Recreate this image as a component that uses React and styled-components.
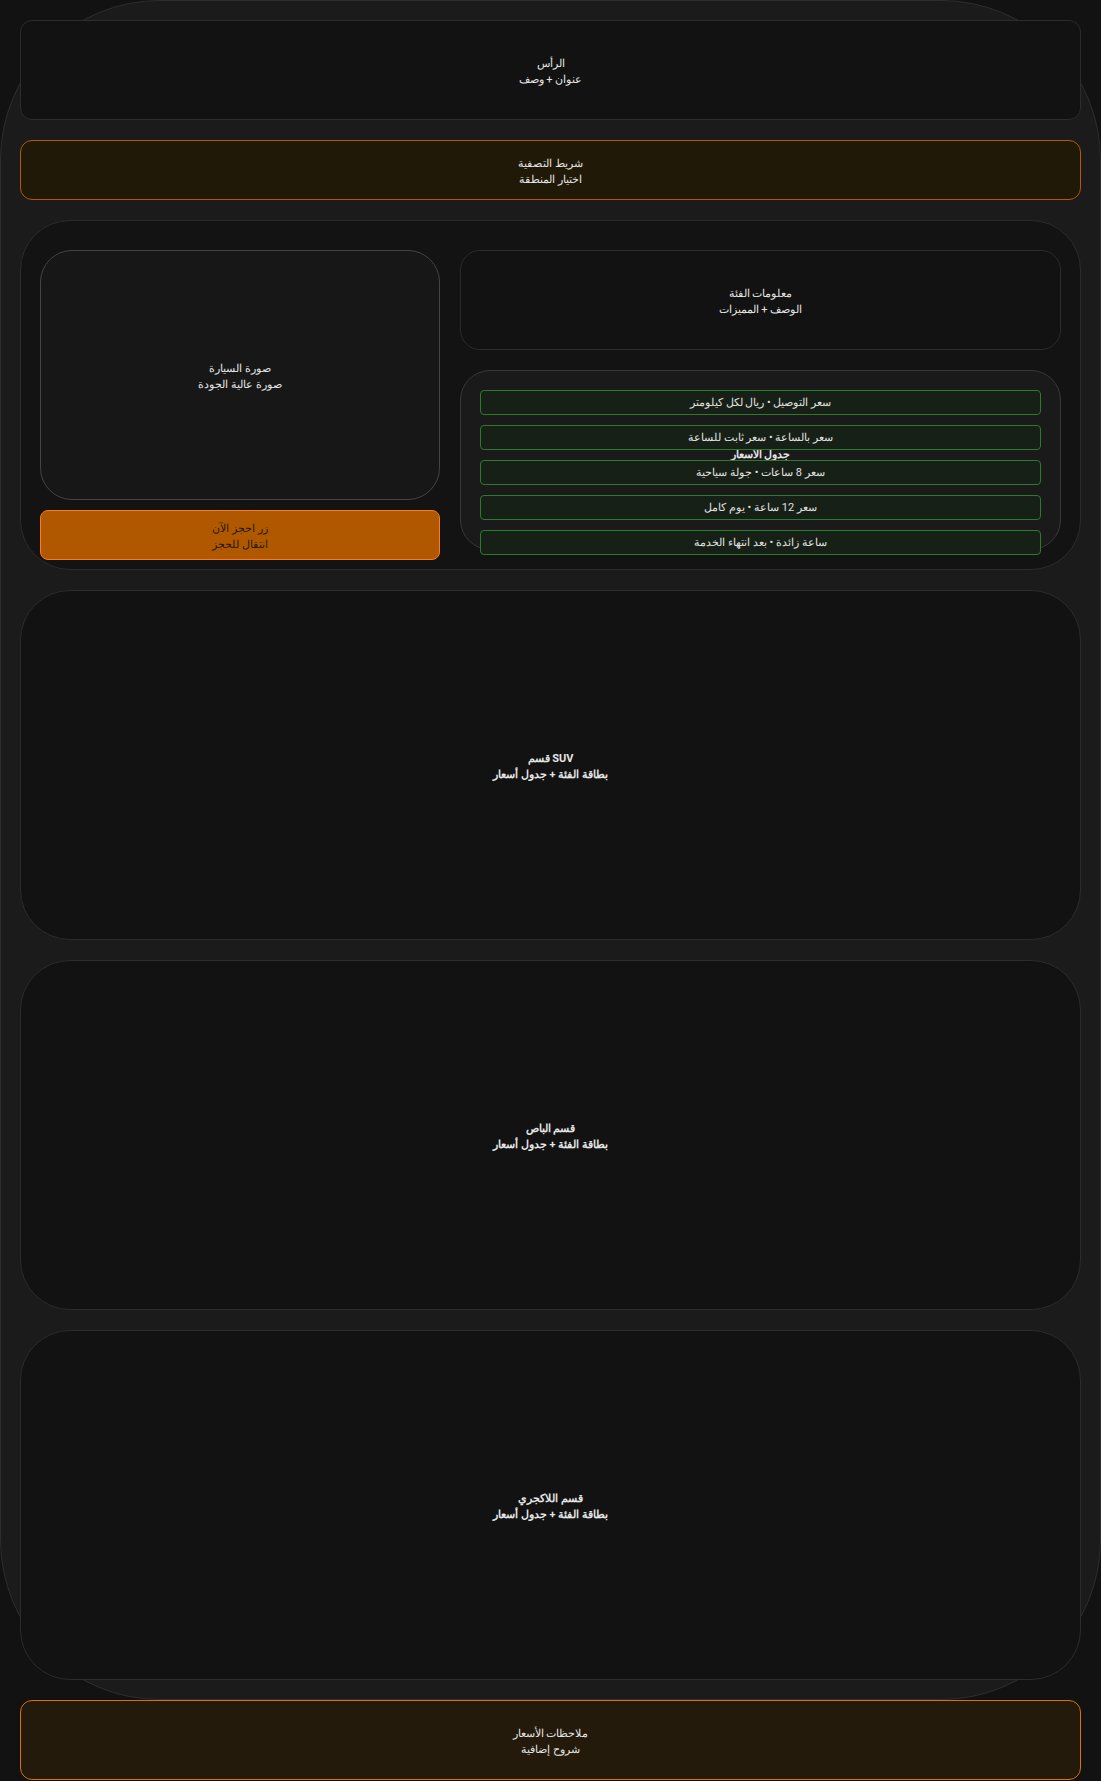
import styled, { createGlobalStyle } from "styled-components"

const GlobalStyle = createGlobalStyle`
  * { box-sizing: border-box; }
  html, body {
    margin: 0;
    padding: 0;
    background: #121212;
  }
  body {
    font-family: Roboto, sans-serif;
    color: #e4e4e4;
  }
`

const Page = styled.div`
  width: 1101px;
  background: #121212;
`
const Frame = styled.div`
  border: 1px solid #2e2e2e;
  border-radius: 160px;
  background: #1b1b1b;
  padding: 19px;
  display: flex;
  flex-direction: column;
  gap: 20px;
`
const Box = styled.div`
  display: flex;
  flex-direction: column;
  align-items: center;
  justify-content: center;
  text-align: center;
  padding-top: 4px;
  font-size: 11px;
  line-height: 16px;
  border: 1px solid ${p => p.$border || "#2c2c2c"};
  background: ${p => p.$bg || "#121212"};
  border-radius: ${p => p.$radius || 12}px;
  height: ${p => p.$h}px;
  font-weight: ${p => (p.$bold ? 700 : 400)};
  color: ${p => p.$color || "#e4e4e4"};
`
const Main = styled.section`
  height: 350px;
  border: 1px solid #2c2c2c;
  border-radius: 50px;
  background: #131313;
  padding: 29px 19px 9px;
  display: grid;
  grid-template-columns: 400px 1fr;
  gap: 20px;
  align-items: start;
`
const Column = styled.div`
  display: flex;
  flex-direction: column;
  gap: ${p => p.$gap}px;
`
const PriceTable = styled.div`
  position: relative;
  height: 180px;
  padding-bottom: 10px;
  border: 1px solid #383838;
  border-radius: 30px;
  background: #1a1a1a;
  display: flex;
  align-items: center;
  justify-content: center;
  font-size: 11px;
  line-height: 16px;
  font-weight: 700;
  color: #e4e4e4;
`
const RowList = styled.div`
  position: absolute;
  top: 19px;
  left: 19px;
  right: 19px;
  display: flex;
  flex-direction: column;
  gap: 10px;
`
const PriceRow = styled.div`
  height: 25px;
  padding-top: 1px;
  border: 1px solid #2d7a2d;
  border-radius: 4px;
  background: #172017;
  display: flex;
  align-items: center;
  justify-content: center;
  font-size: 11px;
  font-weight: 400;
  color: #e0e0e0;
`
const Notes = styled(Box)`
  margin: 0 20px;
`

const Lines = ({ a, b }) => (
  <>
    <div>{a}</div>
    <div>{b}</div>
  </>
)

const prices = [
  "سعر التوصيل • ريال لكل كيلومتر",
  "سعر بالساعة • سعر ثابت للساعة",
  "سعر 8 ساعات • جولة سياحية",
  "سعر 12 ساعة • يوم كامل",
  "ساعة زائدة • بعد انتهاء الخدمة",
]

const sections = ["قسم SUV", "قسم الباص", "قسم اللاكجري"]

const App = () => {
  return (
    <Page>
      <GlobalStyle />
      <Frame>
        <Box $h={100}>
          <Lines a="الرأس" b="عنوان + وصف" />
        </Box>
        <Box $h={60} $bg="#201907" $border="#b35a00">
          <Lines a="شريط التصفية" b="اختيار المنطقة" />
        </Box>
        <Main>
          <Column $gap={10}>
            <Box $h={250} $radius={32} $bg="#171717" $border="#444">
              <Lines a="صورة السيارة" b="صورة عالية الجودة" />
            </Box>
            <Box $h={50} $radius={8} $bg="#b05800" $border="#ff7a1f" $color="#2a1800">
              <Lines a="زر احجز الآن" b="انتقال للحجز" />
            </Box>
          </Column>
          <Column $gap={20}>
            <Box $h={100} $radius={20}>
              <Lines a="معلومات الفئة" b="الوصف + المميزات" />
            </Box>
            <PriceTable>
              جدول الأسعار
              <RowList>
                {prices.map(p => (
                  <PriceRow key={p}>{p}</PriceRow>
                ))}
              </RowList>
            </PriceTable>
          </Column>
        </Main>
        {sections.map(s => (
          <Box key={s} $h={350} $radius={50} $bold>
            <Lines a={s} b="بطاقة الفئة + جدول أسعار" />
          </Box>
        ))}
      </Frame>
      <Notes $h={80} $bg="#231a0b" $border="#d9700a">
        <Lines a="ملاحظات الأسعار" b="شروح إضافية" />
      </Notes>
    </Page>
  )
}

export default App
